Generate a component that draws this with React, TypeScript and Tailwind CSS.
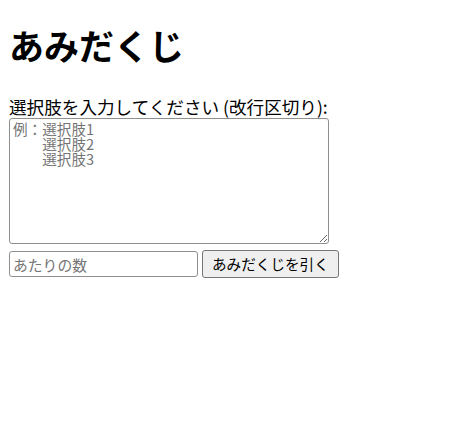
import React, { useState } from "react"

const App = () => {
    const [items, setItems] = useState("")
    const [count, setCount] = useState("")

    return <div className="min-h-screen bg-white px-[9px] pt-[1px] text-black font-['Noto_Sans_CJK_JP',sans-serif]">
        <h1 className="text-[35px] font-bold leading-[44px] mt-[22px] mb-[30px]">あみだくじ</h1>

        <label htmlFor="items" className="block text-[17.6px] leading-[20px]">選択肢を入力してください (改行区切り):</label>
        <textarea
            id="items"
            value={items}
            onChange={e => setItems(e.target.value)}
            placeholder={"例：選択肢1\n　　選択肢2\n　　選択肢3"}
            className="block w-[320px] h-[126px] mt-[1px] px-[3px] py-[2px] text-[14.6px] leading-[15px] border border-[#8f8f8f] rounded-[3px] placeholder:text-[#757575]"
        />

        <div className="flex items-center gap-[4px] mt-[6px]">
            {/* number of winners */}
            <input
                type="text"
                value={count}
                onChange={e => setCount(e.target.value)}
                placeholder="あたりの数"
                className="w-[189px] h-[26px] px-[3px] text-[14.8px] border border-[#8f8f8f] rounded-[3px] placeholder:text-[#757575]"
            />
            <button className="h-[28px] px-[9px] text-[14.6px] bg-[#efefef] border border-[#767676] rounded-[3px]">
                あみだくじを引く
            </button>
        </div>
    </div>
}

export default App
